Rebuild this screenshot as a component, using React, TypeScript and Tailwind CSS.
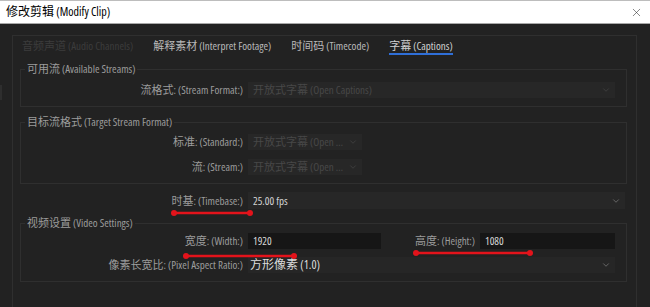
import React from "react";
import { ChevronDown, X } from "lucide-react";

const Row = ({ label, children, className = "" }: { label: string; children: React.ReactNode; className?: string }) => (
  <div className={`flex items-center h-[16px] ${className}`}>
    <div className="w-[216px] shrink-0 text-right text-[11px] leading-[14px] text-[#9c9c9c] whitespace-nowrap">{label}</div>
    <div className="ml-[5px] flex-1 flex items-center h-full min-w-0">{children}</div>
  </div>
);

const Select = ({ text, disabled = false, className = "" }: { text: string; disabled?: boolean; className?: string }) => (
  <div
    className={`h-[16px] flex items-center justify-between pl-[5px] pr-[4px] gap-[2px] ${disabled ? "bg-[#272727] text-[#474747]" : "bg-[#272727] text-[#d4d4d4]"} ${className}`}
  >
    <span className="text-[11px] leading-[14px] truncate">{text}</span>
    <ChevronDown size={10} strokeWidth={1.5} className={disabled ? "text-[#4a4a4a] shrink-0" : "text-[#8a8a8a] shrink-0"} />
  </div>
);

const Input = ({ value, className = "" }: { value: string; className?: string }) => (
  <div className={`h-[16px] flex items-center pl-[5px] bg-[#161616] text-[#d8d8d8] text-[11px] leading-[14px] ${className}`}>{value}</div>
);

const Group = ({ title, children, className = "" }: { title: string; children: React.ReactNode; className?: string }) => (
  <fieldset className={`ml-[7px] mr-[9px] border border-[#2f2f2f] pl-[6px] pr-[11px] pb-[8px] ${className}`}>
    <legend className="-ml-[2px] px-[2px] text-[11px] leading-[14px] text-[#9c9c9c] whitespace-nowrap">{title}</legend>
    {children}
  </fieldset>
);

const Mark = ({ x1, x2, y }: { x1: number; x2: number; y: number }) => (
  <svg className="absolute left-0 top-0 pointer-events-none" width={650} height={307}>
    <line x1={x1} y1={y} x2={x2} y2={y} stroke="#e3131b" strokeWidth={2.5} />
    <circle cx={x1} cy={y} r={3} fill="#e3131b" />
    <circle cx={x2} cy={y} r={3} fill="#e3131b" />
  </svg>
);

export default function App() {
  return (
    <div className="relative w-[650px] h-[307px] overflow-hidden bg-[#222222] flex flex-col font-['Open_Sans','Noto_Sans_CJK_SC',sans-serif] font-stretch-[75%]">
      <div className="h-[24px] shrink-0 bg-white border-t border-[#bdbdbd] border-b border-b-[#a8a8a8] flex items-center justify-between pl-[6px] pr-[7px] text-[12px] text-black">
        <span className="leading-none">修改剪辑 (Modify Clip)</span>
        <X size={13} strokeWidth={1} className="text-[#222]" />
      </div>
      <div className="flex-1 flex">
        <div className="w-[12px] shrink-0 flex flex-col">
          <div className="mt-[61px] h-[15px] w-[2px] bg-[#2e2e2e]" />
        </div>
        <div className="mt-[11px] w-[625px] border-l border-t border-r border-[#2f2f2f] flex flex-col">
          <div className="flex pl-[9px] pt-[3px] gap-[20px] text-[11px] leading-[14px] whitespace-nowrap">
            <span className="text-[#3c3c3c]">音频声道 (Audio Channels)</span>
            <span className="text-[#b9b9b9]">解释素材 (Interpret Footage)</span>
            <span className="text-[#b9b9b9]">时间码 (Timecode)</span>
            <span className="text-[#d0d0d0] border-b-2 border-[#2f6fd8]">字幕 (Captions)</span>
          </div>

          <Group title="可用流 (Available Streams)" className="mt-[7px]">
            <Row label="流格式: (Stream Format:)" className="mt-[6px]">
              <Select text="开放式字幕 (Open Captions)" disabled className="w-full" />
            </Row>
          </Group>

          <Group title="目标流格式 (Target Stream Format)" className="mt-[8px]">
            <Row label="标准: (Standard:)" className="mt-[5px]">
              <Select text="开放式字幕 (Open Captions)" disabled className="w-[114px]" />
            </Row>
            <Row label="流: (Stream:)" className="mt-[9px]">
              <Select text="开放式字幕 (Open Captions)" disabled className="w-[114px]" />
            </Row>
          </Group>

          <Row label="时基: (Timebase:)" className="mt-[8px] ml-[14px] mr-[11px] h-[17px]">
            <Select text="25.00 fps" className="w-full h-[17px]" />
          </Row>

          <Group title="视频设置 (Video Settings)" className="mt-[7px]">
            <Row label="宽度: (Width:)" className="mt-[3px]">
              <Input value="1920" className="w-[133px]" />
              <div className="flex-1 flex items-center justify-end">
                <span className="text-[11px] leading-[14px] text-[#9c9c9c] whitespace-nowrap">高度: (Height:)</span>
                <Input value="1080" className="ml-[5px] w-[135px]" />
              </div>
            </Row>
            <Row label="像素长宽比: (Pixel Aspect Ratio:)" className="mt-[8px]">
              <div className="w-full h-[16px] flex items-center justify-between pl-[2px] pr-[4px] bg-[#262626] text-[#dcdcdc]">
                <span className="text-[12px] leading-[14px] whitespace-nowrap">方形像素 (1.0)</span>
                <ChevronDown size={10} strokeWidth={1.5} className="text-[#8a8a8a]" />
              </div>
            </Row>
          </Group>
        </div>
      </div>

      <Mark x1={174} x2={250} y={213} />
      <Mark x1={186} x2={294} y={256} />
      <Mark x1={416} x2={530} y={253} />
    </div>
  );
}
